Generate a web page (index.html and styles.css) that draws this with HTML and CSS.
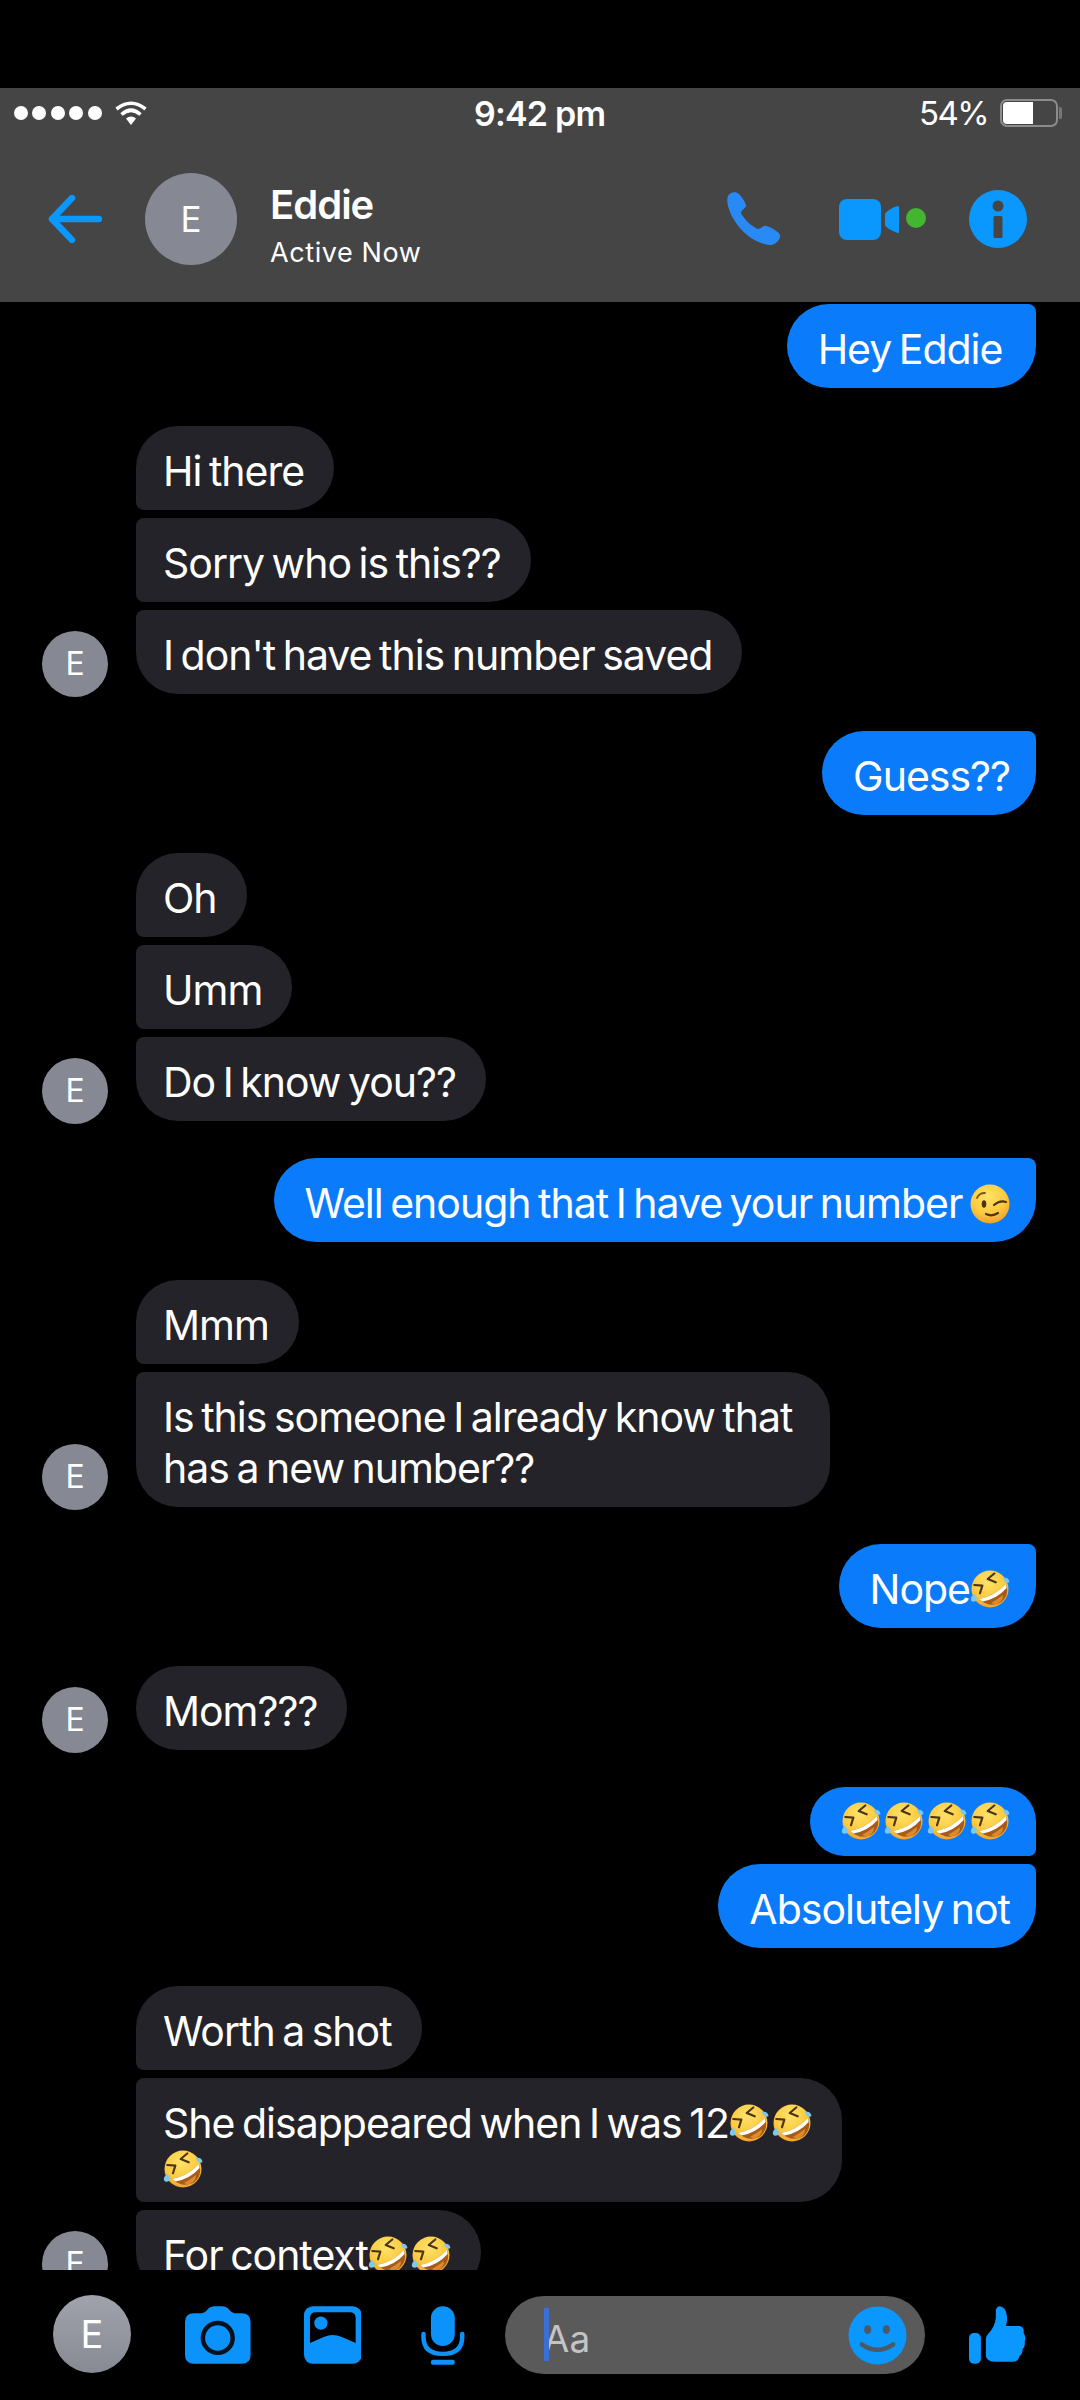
FILE: index.html
```html
<!DOCTYPE html>
<html lang="en">
<head>
    <meta charset="UTF-8">
    <meta name="viewport" content="width=device-width, initial-scale=1.0">
    <title>Eddie</title>
    <link rel="stylesheet" href="styles.css">
</head>
<body>
    <!-- emoji artwork, reused through <use> -->
    <svg class="defs" width="0" height="0">
        <defs>
            <radialGradient id="face" cx="45%" cy="30%" r="75%">
                <stop offset="0%" stop-color="#ffe36b"/>
                <stop offset="60%" stop-color="#fcca3e"/>
                <stop offset="100%" stop-color="#ef9a28"/>
            </radialGradient>
            <symbol id="rofl" viewBox="0 0 40 40">
                <circle cx="20" cy="19" r="18.5" fill="url(#face)"/>
                <path d="M9 29 Q25 26 36 14 Q40 26 30 33 Q19 38 9 29Z" fill="#a85a18"/>
                <path d="M21 33 Q28 29 33 25 Q33 31 28 33.5 Q24 35 21 33Z" fill="#dd8a2c"/>
                <path d="M9 29 Q25 26 36 14 L36.6 18 Q27 29 12.5 31.5Z" fill="#fff"/>
                <path d="M24.3 3.5 L17.7 9 L25.7 12.3" fill="none" stroke="#4e3417" stroke-width="2.2" stroke-linecap="round" stroke-linejoin="round"/>
                <path d="M4.3 15 L12.3 15.7 L10 23.3" fill="none" stroke="#4e3417" stroke-width="2.2" stroke-linecap="round" stroke-linejoin="round"/>
                <path d="M33 8 C36 7 39 8 39.5 12 C37 14 34 12 33 8Z" fill="#7cc8ef"/>
                <path d="M4 24 C6 26 8 28 6 31 C3 33 0 31 1 28 C1.5 26 3 25 4 24Z" fill="#7cc8ef"/>
            </symbol>
            <symbol id="wink" viewBox="0 0 40 40">
                <circle cx="20" cy="20" r="19.5" fill="url(#face)"/>
                <ellipse cx="14" cy="20" rx="2.3" ry="3.8" fill="#4e3417"/>
                <path d="M24 21 Q30 16 36 18" fill="none" stroke="#4e3417" stroke-width="2.2" stroke-linecap="round"/>
                <path d="M7 14 Q9 9 15 9" fill="none" stroke="#7b5220" stroke-width="1.8" stroke-linecap="round"/>
                <path d="M16 30 Q22 33 28 29" fill="none" stroke="#4e3417" stroke-width="2.2" stroke-linecap="round"/>
            </symbol>
        </defs>
    </svg>

    <div class="app">
        <div class="top-bar">
            <div class="status-bar">
                <div class="status-left">
                    <span class="signal"><i></i><i></i><i></i><i></i><i></i></span>
                    <svg class="wifi" viewBox="0 0 32 24">
                        <path d="M1.5 8 Q16 -3.5 30.5 8" fill="none" stroke="#fff" stroke-width="3.6"/>
                        <path d="M6.5 13.5 Q16 5 25.5 13.5" fill="none" stroke="#fff" stroke-width="3.6"/>
                        <path d="M11 17.5 Q16 13.5 21 17.5 L16 24Z" fill="#fff"/>
                    </svg>
                </div>
                <div class="status-time">9:42 pm</div>
                <div class="status-right">
                    <span>54%</span>
                    <span class="battery"><span class="battery-level"></span></span>
                </div>
            </div>
            <div class="header">
                <svg class="back" viewBox="0 0 54 48">
                    <path d="M24 3 L4 24 L24 45 M4 24 H51" fill="none" stroke="#0a98ff" stroke-width="6.5" stroke-linecap="round" stroke-linejoin="round"/>
                </svg>
                <div class="avatar avatar-large">E</div>
                <div class="contact">
                    <div class="contact-name">Eddie</div>
                    <div class="contact-state">Active Now</div>
                </div>
                <div class="header-actions">
                    <svg class="phone" viewBox="0 0 54 54">
                        <path d="M1 4 C3 0 9 -1 12 2 C15 5 19 11 19 14 C19 16 14 18 14 21 C16 26 25 35 31 37 C34 37 36 33 39 34 C44 35 51 39 53 43 C54 48 47 54 42 53 C22 50 6 32 1 14 C0 10 0 7 1 4Z" fill="#2a8af5"/>
                    </svg>
                    <svg class="video" viewBox="0 0 88 42">
                        <rect x="0" y="1" width="42" height="41" rx="8" fill="#0a98ff"/>
                        <path d="M47 16 Q50 12 59 9 V34 Q50 31 47 27Z" fill="#0a98ff" stroke="#0a98ff" stroke-width="2" stroke-linejoin="round"/>
                        <circle cx="77" cy="20" r="10" fill="#43b52f"/>
                    </svg>
                    <svg class="info" viewBox="0 0 58 58">
                        <circle cx="29" cy="29" r="29" fill="#0a98ff"/>
                        <circle cx="29" cy="16" r="5.5" fill="#454545"/>
                        <rect x="24.5" y="26" width="9" height="22" rx="1.5" fill="#454545"/>
                    </svg>
                </div>
            </div>
        </div>

        <div class="thread">
            <div class="group out">
                <div class="bubbles">
                    <div class="bubble first-out">Hey Eddie&nbsp;</div>
                </div>
            </div>

            <div class="group in">
                <div class="avatar avatar-small">E</div>
                <div class="bubbles">
                    <div class="bubble top">Hi there</div>
                    <div class="bubble mid">Sorry who is this??</div>
                    <div class="bubble end">I don't have this number saved</div>
                </div>
            </div>

            <div class="group out">
                <div class="bubbles">
                    <div class="bubble first-out">Guess??</div>
                </div>
            </div>

            <div class="group in">
                <div class="avatar avatar-small">E</div>
                <div class="bubbles">
                    <div class="bubble top">Oh</div>
                    <div class="bubble mid">Umm</div>
                    <div class="bubble end">Do I know you??</div>
                </div>
            </div>

            <div class="group out">
                <div class="bubbles">
                    <div class="bubble first-out">Well enough that I have your number <svg class="emoji"><use href="#wink"/></svg></div>
                </div>
            </div>

            <div class="group in">
                <div class="avatar avatar-small">E</div>
                <div class="bubbles">
                    <div class="bubble top">Mmm</div>
                    <div class="bubble end">Is this someone I already know that&nbsp;<br>has a new number??</div>
                </div>
            </div>

            <div class="group out">
                <div class="bubbles">
                    <div class="bubble first-out">Nope<svg class="emoji"><use href="#rofl"/></svg></div>
                </div>
            </div>

            <div class="group in">
                <div class="avatar avatar-small">E</div>
                <div class="bubbles">
                    <div class="bubble">Mom???</div>
                </div>
            </div>

            <div class="group out">
                <div class="bubbles">
                    <div class="bubble emoji-only out-top">
                        <svg class="emoji"><use href="#rofl"/></svg><svg class="emoji"><use href="#rofl"/></svg><svg class="emoji"><use href="#rofl"/></svg><svg class="emoji"><use href="#rofl"/></svg>
                    </div>
                    <div class="bubble first-out">Absolutely not</div>
                </div>
            </div>

            <div class="group in">
                <div class="avatar avatar-small">E</div>
                <div class="bubbles">
                    <div class="bubble top">Worth a shot</div>
                    <div class="bubble mid">She disappeared when I was 12<svg class="emoji"><use href="#rofl"/></svg><svg class="emoji"><use href="#rofl"/></svg>
                        <div class="emoji-line"><svg class="emoji"><use href="#rofl"/></svg></div>
                    </div>
                    <div class="bubble end">For context<svg class="emoji"><use href="#rofl"/></svg><svg class="emoji"><use href="#rofl"/></svg></div>
                </div>
            </div>
        </div>

        <div class="composer">
            <div class="avatar avatar-me">E</div>
            <svg class="camera" viewBox="0 0 66 58">
                <path d="M9 7 H17 Q20 7 22 4 Q25 0 30 0 H37 Q42 0 45 4 Q47 7 50 7 H57 Q66 7 66 16 V49 Q66 58 57 58 H9 Q0 58 0 49 V16 Q0 7 9 7Z" fill="#0c93fb"/>
                <circle cx="33" cy="32" r="15" fill="#0c93fb" stroke="#04111d" stroke-width="4.5"/>
            </svg>
            <svg class="gallery" viewBox="0 0 58 58">
                <rect x="0" y="0" width="58" height="58" rx="9" fill="#0c93fb"/>
                <path d="M12 6 H46 Q52 6 52 12 V37 L38 31 Q29 27 20 31 L6 37 V12 Q6 6 12 6Z" fill="#000"/>
                <circle cx="17" cy="17" r="6.7" fill="#0c93fb"/>
            </svg>
            <svg class="mic" viewBox="0 0 44 59">
                <rect x="10" y="0" width="24" height="40" rx="12" fill="#0c93fb"/>
                <path d="M2.5 28 V31 Q2.5 48 22 48 Q41.5 48 41.5 31 V28" fill="none" stroke="#0c93fb" stroke-width="4.5" stroke-linecap="round"/>
                <rect x="10" y="54" width="24" height="5" rx="2" fill="#0c93fb"/>
            </svg>
            <div class="input">
                <span class="caret"></span>
                <span class="placeholder">Aa</span>
                <svg class="smiley" viewBox="0 0 60 60">
                    <circle cx="30" cy="30" r="29.5" fill="#0a98ff"/>
                    <ellipse cx="20" cy="24" rx="3.6" ry="4.4" fill="#4d5a66"/>
                    <ellipse cx="39" cy="24" rx="3.6" ry="4.4" fill="#4d5a66"/>
                    <path d="M14 39 Q30 50 46 39" fill="none" stroke="#4d5a66" stroke-width="4.5" stroke-linecap="round"/>
                </svg>
            </div>
            <svg class="thumb" viewBox="0 0 58 60">
                <rect x="0" y="27" width="12" height="31" rx="5" fill="#0a98ff"/>
                <path d="M17 33 Q17 30 20 27 Q26 21 27 12 L27 4 Q28 0 31 0 Q37 1 38 9 Q39 15 37 20 H51 Q56 21 55 27 Q58 31 56 36 Q57 40 54 43 Q54 48 51 50 Q50 56 44 56 H26 Q19 56 17 51Z" fill="#0a98ff"/>
            </svg>
        </div>
    </div>
</body>
</html>
```

FILE: styles.css
```css
* {
    margin: 0;
    padding: 0;
    box-sizing: border-box;
}

body {
    background: #000;
    font-family: 'Inter', 'Liberation Sans', sans-serif;
    color: #fff;
}

.defs {
    position: absolute;
}

.app {
    width: 1080px;
    height: 2400px;
    padding-top: 88px;
    display: flex;
    flex-direction: column;
}

/* Top bar */
.top-bar {
    height: 214px;
    background: #454545;
    flex-shrink: 0;
}

.status-bar {
    height: 50px;
    padding: 0 22px 0 14px;
    display: flex;
    align-items: center;
    justify-content: space-between;
    position: relative;
}

.status-left {
    display: flex;
    align-items: center;
    gap: 13px;
}

.signal {
    display: flex;
    gap: 4.4px;
}

.signal i {
    display: block;
    width: 14px;
    height: 14px;
    background: #fff;
    border-radius: 50%;
}

.wifi {
    width: 32px;
    height: 24px;
}

.status-time {
    position: absolute;
    left: 474px;
    font-size: 34px;
    font-weight: 600;
    letter-spacing: -0.8px;
}

.status-right {
    display: flex;
    align-items: center;
    gap: 12px;
    font-size: 33px;
    letter-spacing: -1.6px;
}

.battery {
    width: 58px;
    height: 28px;
    border: 2px solid #8c8c8c;
    border-radius: 7px;
    padding: 1px;
    position: relative;
}

.battery::after {
    content: '';
    position: absolute;
    right: -6px;
    top: 6px;
    width: 3px;
    height: 12px;
    background: #777;
    border-radius: 0 2px 2px 0;
}

.battery-level {
    display: block;
    width: 30px;
    height: 100%;
    background: #fff;
    border-radius: 4px 0 0 4px;
}

.header {
    height: 164px;
    padding: 0 53px 2px 48px;
    display: flex;
    align-items: center;
}

.back {
    width: 54px;
    height: 48px;
    flex-shrink: 0;
}

.avatar {
    border-radius: 50%;
    background: #868993;
    display: flex;
    align-items: center;
    justify-content: center;
    flex-shrink: 0;
}

.avatar-large {
    width: 92px;
    height: 92px;
    margin-left: 43px;
    font-size: 35px;
}

.contact {
    margin: 16px 0 0 33px;
}

.contact-name {
    font-size: 40px;
    font-weight: 600;
    letter-spacing: -1px;
    line-height: 46px;
}

.contact-state {
    font-size: 27px;
    letter-spacing: 0.6px;
    line-height: 38px;
    margin-top: 6px;
}

.header-actions {
    margin-left: auto;
    display: flex;
    align-items: center;
}

.phone {
    width: 54px;
    height: 54px;
    margin-right: 58px;
}

.video {
    width: 88px;
    height: 42px;
    margin-right: 42px;
}

.info {
    width: 58px;
    height: 58px;
}

/* Conversation */
.thread {
    height: 1968px;
    padding: 2px 44px 0 42px;
    overflow: hidden;
    flex-shrink: 0;
    display: flex;
    flex-direction: column;
    gap: 37.5px;
}

.group {
    display: flex;
    flex-shrink: 0;
}

.group.out {
    justify-content: flex-end;
}

.bubbles {
    display: flex;
    flex-direction: column;
    gap: 8px;
}

.group.out .bubbles {
    align-items: flex-end;
}

.group.in .bubbles {
    align-items: flex-start;
    margin-left: 28px;
}

.avatar-small {
    width: 66px;
    height: 66px;
    align-self: flex-end;
    margin-bottom: -3px;
    font-size: 32px;
}

.bubble {
    font-size: 41px;
    letter-spacing: -1px;
    word-spacing: -3px;
    line-height: 51px;
    padding: 20px 30px 13px 27px;
    border-radius: 42px;
    white-space: nowrap;
}

.group.in .bubble {
    background: #242329;
}

.group.out .bubble {
    background: #0a7cfb;
    padding: 20px 26px 13px 31px;
}

.bubble.top {
    border-bottom-left-radius: 8px;
}

.bubble.mid {
    border-top-left-radius: 8px;
    border-bottom-left-radius: 8px;
}

.bubble.end {
    border-top-left-radius: 8px;
}

.bubble.first-out {
    border-top-right-radius: 8px;
}

.bubble.out-top {
    border-bottom-right-radius: 8px;
}

.group.out .bubble.emoji-only {
    height: 69px;
    padding: 15px 26px 0 31px;
    display: flex;
}

.emoji {
    width: 40px;
    height: 40px;
    vertical-align: -6px;
}

.emoji + .emoji {
    margin-left: 3px;
}

.emoji-line {
    line-height: 40px;
    height: 40px;
}

/* Composer */
.composer {
    flex: 1;
    padding: 25px 53px 0;
    display: flex;
    align-items: flex-start;
}

.avatar-me {
    width: 78px;
    height: 78px;
    font-size: 38px;
    background: linear-gradient(#a0a3ab, #878a92);
}

.camera {
    width: 66px;
    height: 58px;
    margin: 11px 0 0 54px;
}

.gallery {
    width: 58px;
    height: 58px;
    margin: 11px 0 0 53px;
}

.mic {
    width: 44px;
    height: 59px;
    margin: 11px 0 0 60px;
}

.input {
    width: 423px;
    height: 78px;
    margin: 1px 0 0 40px;
    padding: 0 18px 0 39px;
    background: #5a5a5a;
    border-radius: 39px;
    display: flex;
    align-items: center;
    position: relative;
}

.caret {
    position: absolute;
    left: 39px;
    top: 12px;
    width: 5px;
    height: 53px;
    background: #3b6fd8;
}

.placeholder {
    font-size: 37px;
    color: #c4c4c4;
    margin-top: 6px;
}

.smiley {
    width: 59px;
    height: 59px;
    margin-left: auto;
}

.thumb {
    width: 58px;
    height: 60px;
    margin: 11px 0 0 44px;
}
```
